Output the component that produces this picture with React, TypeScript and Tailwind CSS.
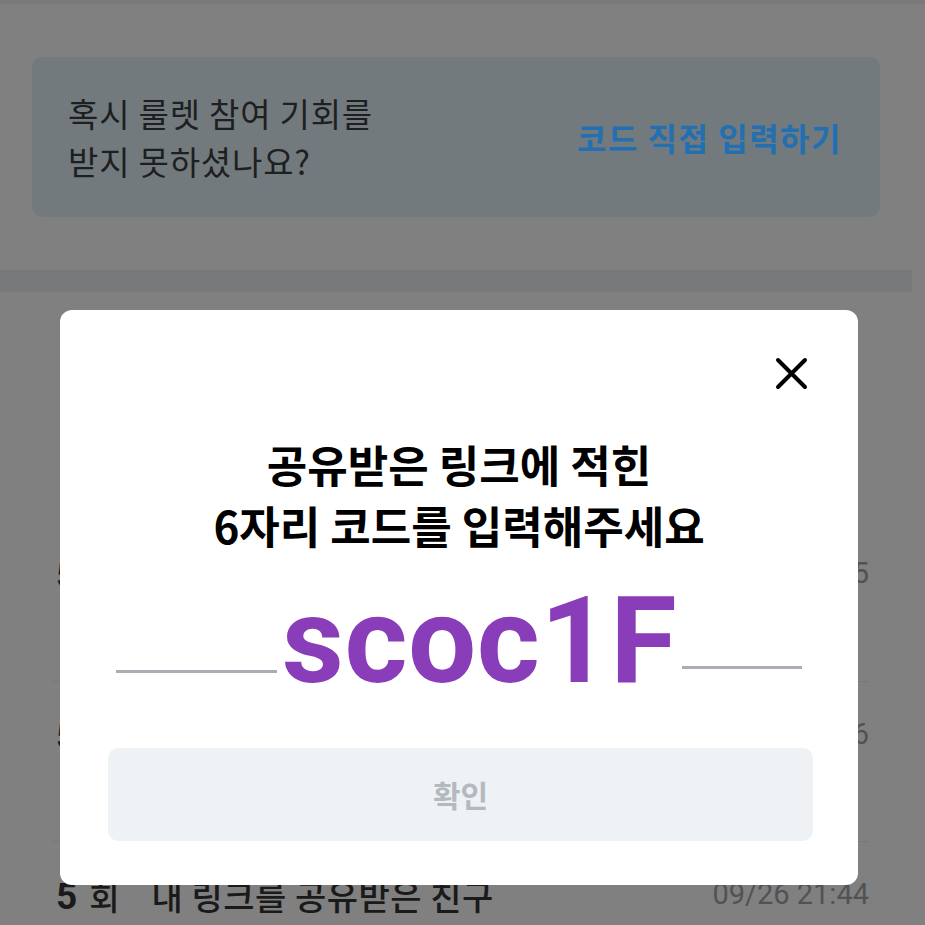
import React from "react";

const KR = { fontFamily: '"Noto Sans CJK KR", "Noto Sans", sans-serif' };

function Row({ time, first }: { time: string; first?: boolean }) {
  return (
    <div
      className={
        "h-[160px] flex items-start justify-between pt-[34px] " +
        (first ? "" : "border-t border-[#76797c]")
      }
    >
      <div className="flex items-center h-[40px] text-[#1a1a1a]" style={KR}>
        <span className="text-[37px] font-bold leading-none ml-[4px]" style={{ fontFamily: '"Roboto", sans-serif' }}>
          5
        </span>
        <span className="text-[33px] font-medium ml-[12px] leading-none">회</span>
        <span className="text-[34px] font-medium ml-[32px] leading-none tracking-[0.5px]">내 링크를 공유받은 친구</span>
      </div>
      <div
        className="text-[29px] leading-none text-[#505356] mt-[4px]"
        style={{ fontFamily: '"Roboto", sans-serif' }}
      >
        {time}
      </div>
    </div>
  );
}

export default function App() {
  return (
    <div className="relative w-[925px] h-[925px] overflow-hidden bg-[#808080]">
      <div className="h-[4px] bg-[#7a7a7a]" />
      <div className="mt-[53px] ml-[32px] w-[848px] h-[160px] rounded-[10px] bg-[#737a7e] flex items-center justify-between pl-[36px] pr-[38px]">
        <div className="text-[33px] leading-[48px] text-[#1d1f20] tracking-[0.8px]" style={KR}>
          <div>혹시 룰렛 참여 기회를</div>
          <div>받지 못하셨나요?</div>
        </div>
        <div className="text-[32px] font-bold text-[#2270b2] leading-none tracking-[1.5px]" style={KR}>
          코드 직접 입력하기
        </div>
      </div>
      <div className="mt-[53px] w-[912px] h-[22px] bg-[#77797b]" />
      <div className="mx-[52px] w-[817px]">
        <div className="h-[229px]" />
        <Row time="09/26 21:45" first />
        <Row time="09/26 21:46" />
        <Row time="09/26 21:44" />
      </div>

      {/* Modal */}
      <div className="absolute left-[60px] top-[310px] w-[798px] h-[575px] bg-white rounded-[12px] flex flex-col">
        <div className="flex justify-end pt-[47px] pr-[50px]">
          <svg width="33" height="33" viewBox="0 0 33 33" fill="none">
            <path d="M3 3 L30 30 M30 3 L3 30" stroke="#000" strokeWidth="4" strokeLinecap="round" />
          </svg>
        </div>
        <div
          className="mt-[44px] text-center text-[44px] leading-[61px] font-bold text-black"
          style={KR}
        >
          <div>공유받은 링크에 적힌</div>
          <div>6자리 코드를 입력해주세요</div>
        </div>
        <div className="mt-[25px] flex items-end justify-center">
          <div className="w-[161px] h-[3px] bg-[#a9aeb4] mb-[29px]" />
          <div
            className="mx-[5px] text-[121px] leading-none font-bold text-[#8a3db8] tracking-[0.5px]"
            style={{ fontFamily: '"Roboto", sans-serif' }}
          >
            scoc1F
          </div>
          <div className="w-[120px] h-[3px] bg-[#a9aeb4] mb-[33px]" />
        </div>
        <div className="mt-[46px] ml-[48px] w-[705px] h-[93px] rounded-[10px] bg-[#eef2f5] flex items-center justify-center">
          <span className="text-[30px] font-semibold text-[#b4b9c0]" style={KR}>
            확인
          </span>
        </div>
      </div>
    </div>
  );
}
